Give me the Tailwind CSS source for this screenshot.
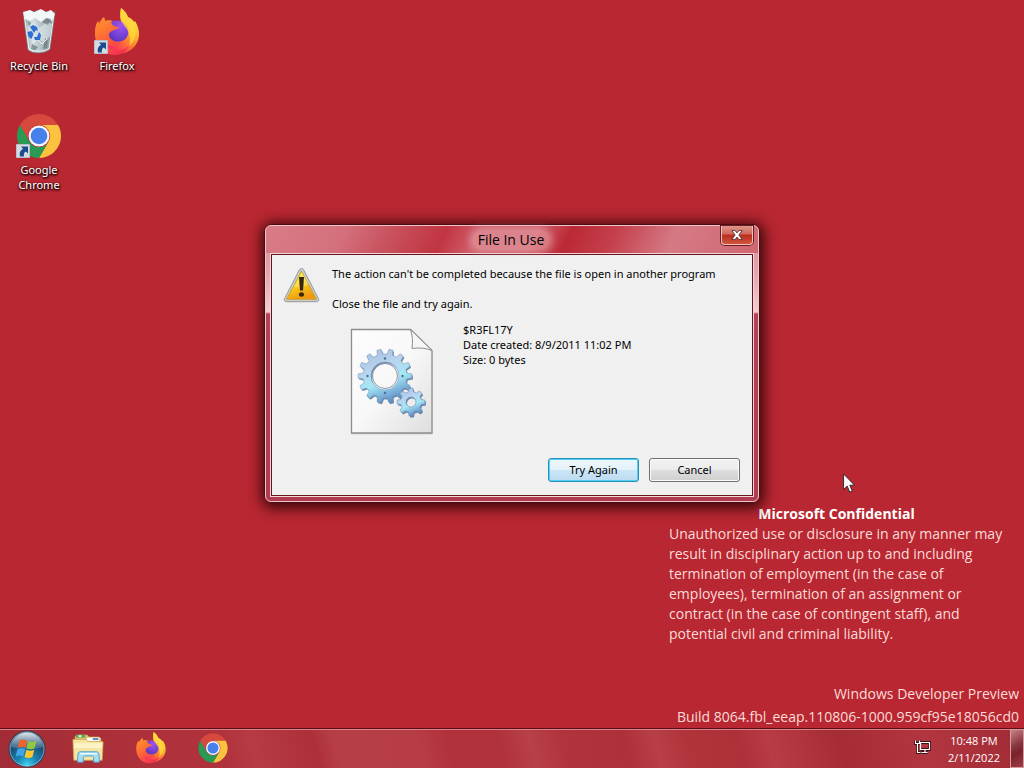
<!DOCTYPE html>
<html lang="en">
<head>
<meta charset="utf-8">
<title>Desktop</title>
<script src="https://cdn.jsdelivr.net/npm/@tailwindcss/browser@4"></script>
</head>
<body class="relative flex h-screen flex-col overflow-hidden bg-[#b92732] font-['Open_Sans','Noto_Sans',sans-serif] text-[11px] leading-[15px] text-black">

<!-- Shared artwork -->
<svg class="absolute size-0" aria-hidden="true">
  <defs>
    <linearGradient id="ffBody" x1="0.85" y1="0.1" x2="0.2" y2="0.95">
      <stop offset="0" stop-color="#fff04a"/><stop offset="0.3" stop-color="#ffbd32"/><stop offset="0.55" stop-color="#ff7a30"/><stop offset="0.8" stop-color="#fb3b56"/><stop offset="1" stop-color="#e8258a"/>
    </linearGradient>
    <linearGradient id="ffHead" x1="0" y1="0" x2="0.6" y2="1">
      <stop offset="0" stop-color="#ff9a2c"/><stop offset="0.5" stop-color="#ff6a35"/><stop offset="1" stop-color="#f4334f"/>
    </linearGradient>
    <radialGradient id="ffGlobe" cx="0.6" cy="0.25" r="0.8">
      <stop offset="0" stop-color="#a552e8"/><stop offset="0.6" stop-color="#7542d8"/><stop offset="1" stop-color="#5a35b8"/>
    </radialGradient>
    <symbol id="firefox" viewBox="0 0 48 48">
      <path fill="url(#ffBody)" d="M28 0c4 3 6 6 7 9 3 1 5 3 6 5l1-1c3 5 4 9 4 13 0 11-9 20-22 20S2 38 2 25c0-5 1-9 3-12l1 3c1-3 3-5 5-7l1 4c3-1 6-1 9 1 3-1 5-1 7 0-1-4-1-9 0-14z"/>
      <path fill="url(#ffHead)" d="M2 25c0-5 1-9 3-12l1 3c1-3 3-5 5-7l1 4c4-1 7 0 9 3l5 3c-1 2-4 3-6 4-2 1-3 3-3 5 1 5 6 8 12 6-4 5-12 5-17 1 4 9 17 10 24 3-3 6-8 9-14 9C10 47 2 37 2 25z"/>
      <path fill="url(#ffGlobe)" d="M18 14c6-3 13-1 16 4 3 6 1 13-5 15-6 2-13-1-13-6 0-3 3-4 5-5 3-1 5-2 5-3-3 0-7-1-8-5z"/>
      <path fill="#ffd83e" d="M28 0c5 4 6 8 7 11 6 4 9 10 7 18-1 4-3 7-6 9 2-7 1-13-3-18-4-5-7-9-5-20z" opacity=".75"/>
    </symbol>
    <symbol id="chrome" viewBox="0 0 48 48">
      <path fill="#d6493c" d="M24 13H43.05A22 22 0 0 0 4.95 13L14.47 29.5A11 11 0 0 1 24 13z"/>
      <path fill="#fac23f" d="M43.05 13H24A11 11 0 0 1 33.53 29.5L24 46A22 22 0 0 0 43.05 13z"/>
      <path fill="#289a54" d="M4.95 13A22 22 0 0 0 24 46L33.53 29.5A11 11 0 0 1 14.47 29.5z"/>
      <circle cx="24" cy="24" r="10.5" fill="#f4f6fb"/>
      <circle cx="24" cy="24" r="8.3" fill="#4680ea"/>
    </symbol>
    <symbol id="shortcut" viewBox="0 0 14 14">
      <path fill="#d5dae3" stroke="#b9bfca" d="M.5.5h13v13H.5z"/>
      <path fill="#1c4a8f" d="M5 2.500h7v7L9.800 7.500C8 8.500 7.500 10 8 12.500H4C3 9 4 6.500 7 4.800z"/>
    </symbol>
  </defs>
</svg>

<main class="relative min-h-0 flex-1">
  <nav aria-label="Desktop icons" class="grid w-[156px] grid-cols-2 auto-rows-[104px] text-center font-['Noto_Sans',sans-serif] text-white [text-shadow:1px_1px_2px_#000,0_1px_3px_#000]">
    <a href="#recycle" class="flex flex-col items-center gap-0.5 pt-2">
      <svg class="size-12" viewBox="0 0 48 48" aria-hidden="true">
        <defs><linearGradient id="bin" x1="0" x2="1"><stop offset="0" stop-color="#8f9fa6"/><stop offset=".3" stop-color="#d3dde1"/><stop offset=".65" stop-color="#a9b8be"/><stop offset="1" stop-color="#7a888e"/></linearGradient></defs>
        <path fill="url(#bin)" stroke="#6f7c82" stroke-width=".8" d="M8 4l5 38c5 4 17 4 22-1l5-37z"/>
        <path fill="#4b585c" d="M9 5c8-3 24-3 30 0-5 5-25 5-30 0z"/>
        <path fill="#f3f7f8" d="M8 4l7-2 4 2 7-3 5 3 5-2 4 4-3 7-6-3-5 4-6-4-5 3-5-2z"/>
        <path fill="#dfe8ec" d="M12 18l7-4 5 6 8-6 5 2-2 12-6 6-6-3-5 4-4-6z" opacity=".65"/>
        <path fill="#64747a" d="M27 14l5-4 4 1-3 6zM13 13l3 2-2 4zM30 30l3 3-1 7-4 1zM17 36l6 3-3 4-4-2z" opacity=".65"/>
        <path fill="none" stroke="#eef3f5" stroke-width="1" d="M9 6l5 35c6 3 14 3 20 0l5-35M18 35l4-4 5 5 5-5"/>
        <g fill="#2f6fd2"><path d="M15 19l3-2 4 2 1 4-2-1-2 3-2-3z"/><path d="M12.500 24l4-1 2 3-2 5-3-2z"/><path d="M24 24l2 3-1 5h-5l-1-3h3z"/></g>
      </svg>
      <span>Recycle Bin</span>
    </a>
    <a href="#firefox" class="flex flex-col items-center gap-0.5 pt-2">
      <svg class="size-12" viewBox="0 0 48 48" aria-hidden="true"><use href="#firefox" width="48" height="48"/><use href="#shortcut" x="1" y="32" width="14" height="14"/></svg>
      <span>Firefox</span>
    </a>
    <a href="#chrome" class="flex flex-col items-center gap-0.5 pt-2">
      <svg class="size-12" viewBox="0 0 48 48" aria-hidden="true"><use href="#chrome" width="48" height="48"/><use href="#shortcut" x="1" y="32" width="14" height="14"/></svg>
      <span>Google<br>Chrome</span>
    </a>
  </nav>

  <section class="absolute right-0 bottom-0 flex w-[355px] flex-col text-[14px] leading-5 text-[#fbdcd8]">
    <h2 class="w-[335px] text-center font-bold text-white">Microsoft Confidential</h2>
    <p class="whitespace-nowrap">Unauthorized use or disclosure in any manner may<br>result in disciplinary action up to and including<br>termination of employment (in the case of<br>employees), termination of an assignment or<br>contract (in the case of contingent staff), and<br>potential civil and criminal liability.</p>
    <p class="mt-[38px] pr-[5px] text-right leading-[23px] whitespace-nowrap">Windows Developer Preview<br>Build 8064.fbl_eeap.110806-1000.959cf95e18056cd0</p>
  </section>

  <div role="dialog" aria-labelledby="dlg-title" class="absolute top-[224px] left-[264px] w-[496px] rounded-[7px] border border-[#4a0b12] shadow-[1px_2px_14px_3px_rgba(30,0,0,0.85)]">
    <div class="rounded-[6px] border border-[#f3c3c8] bg-[linear-gradient(#d98c96_0,#e3a9b0_50px,#f0d0d4_86px,#b24358_88px,#b03c50_100%)] px-1 pb-1">
      <header class="-mx-1 flex h-[27px] items-start rounded-t-[5px] bg-[linear-gradient(115deg,#d87c88_0%,#d4707c_16%,#c95662_24%,#c13541_36%,#cf5f6b_43%,#cf5f6b_54%,#bb2935_61%,#c4404c_70%,#d57a85_82%,#cf6772_100%)] pl-[35px]">
        <h1 id="dlg-title" class="flex h-full flex-1 items-center justify-center text-[14px]"><span class="rounded-full bg-[#e9a9af]/50 px-1.5 leading-5 shadow-[0_0_6px_3px_rgba(233,169,175,0.5)]">File In Use</span></h1>
        <button type="button" aria-label="Close" class="mr-[5px] flex h-[19px] w-8 items-center justify-center rounded-b-[4px] border border-t-0 border-[#f1c1bd] bg-[linear-gradient(#de958b_0%,#d0685a_45%,#b92c1c_50%,#d2553c_100%)] shadow-[0_0_0_1px_#6d1c1f]">
          <svg class="h-3 w-[14px]" viewBox="0 0 12 10" aria-hidden="true"><path d="M1.500 1.200h2.800L6 3.200l1.700-2h2.800L7.600 5l2.900 3.800H7.700L6 6.800l-1.700 2H1.500L4.400 5z" fill="#fff" stroke="#5b3236" stroke-width=".8"/></svg>
        </button>
      </header>
      <div class="border border-[#f6d5d8]">
        <div class="border border-[#651420] bg-[#f0f0f0] pt-[11px] pr-3 pb-[13px] pl-[11px] font-['Noto_Sans',sans-serif]">
          <div class="flex gap-3">
            <svg class="mt-px h-[36px] w-[37px] shrink-0" viewBox="0 0 37 36" aria-hidden="true">
              <defs><linearGradient id="warn" x1="0" y1="0" x2=".4" y2="1"><stop offset="0" stop-color="#e9ee28"/><stop offset=".5" stop-color="#fbd51a"/><stop offset="1" stop-color="#f09a12"/></linearGradient></defs>
              <path d="M18.500 1.500c1 0 1.800.6 2.300 1.600l14.600 28.500c.9 1.800 0 3.100-1.900 3.100h-30c-1.900 0-2.800-1.300-1.900-3.100L16.200 3.100c.5-1 1.300-1.600 2.300-1.600z" fill="#c9ced1" stroke="#92989c"/>
              <path d="M18.500 4L3.500 32.300h30z" fill="url(#warn)" stroke="#c79a1c" stroke-width=".8"/>
              <path d="M18.500 5.500L11 20c6 1 12-1 15-3z" fill="#fff" opacity=".25"/>
              <path d="M16 10h5l-1 13.500h-3z" fill="#33260a"/><ellipse cx="18.500" cy="27.500" rx="2.600" ry="2.200" fill="#33260a"/>
            </svg>
            <div class="flex-1">
              <p>The action can't be completed because the file is open in another program</p>
              <p class="mt-[15px]">Close the file and try again.</p>
              <div class="mt-[11px] ml-[18px] flex gap-[29px]">
                <svg class="mt-1.5 h-[107px] w-[84px] shrink-0" viewBox="0 0 84 107" aria-hidden="true">
                  <defs>
                    <linearGradient id="page" x1="0" y1="0" x2="1" y2="1"><stop offset="0" stop-color="#fdfdfd"/><stop offset=".5" stop-color="#f8f8f8"/><stop offset="1" stop-color="#dedede"/></linearGradient>
                    <linearGradient id="gear" x1=".2" y1="0" x2=".6" y2="1"><stop offset="0" stop-color="#a4bfe2"/><stop offset=".35" stop-color="#b9d4ee"/><stop offset=".62" stop-color="#a5e8f5"/><stop offset="1" stop-color="#5b89c4"/></linearGradient>
                  </defs>
                  <path d="M1.500 2.500h60l21 21v83h-81z" fill="#000" opacity=".12"/>
                  <path d="M1.500 1.500h59l21.500 21V105h-80.500z" fill="url(#page)" stroke="#8d8d8d" stroke-width="1.300"/>
                  <path d="M60.500 1.500c2 6 2.500 12 1.500 19 7-1 14-.5 20 2z" fill="#f6f6f6" stroke="#8d8d8d"/>
                  <g id="gears" stroke="#6f8fb6"></g>
                </svg>
                <p>$R3FL17Y<br>Date created: 8/9/2011 11:02 PM<br>Size: 0 bytes</p>
              </div>
            </div>
          </div>
          <div class="mt-[23px] flex justify-end gap-[10px]">
            <button type="button" class="h-6 w-[91px] rounded-[3px] border border-[#2b8fb5] bg-[linear-gradient(#eff6fb_0%,#e3f1fa_48%,#cbe5f5_52%,#bcdcf0_100%)] pb-0.5 shadow-[inset_0_0_0_1px_#4fd2f2]">Try Again</button>
            <button type="button" class="h-6 w-[91px] rounded-[3px] border border-[#707070] bg-[linear-gradient(#f3f3f3_0%,#ebebeb_48%,#dddddd_52%,#cfcfcf_100%)] pb-0.5 shadow-[inset_0_0_0_1px_#fbfbfb]">Cancel</button>
          </div>
        </div>
      </div>
    </div>
  </div>

  <svg class="absolute top-[473px] left-[843px] h-5 w-3" viewBox="0 0 12 20" aria-hidden="true"><path d="M.6 1v15.500l3.600-3.400 2.500 6 2.600-1.100-2.500-5.800h4.700z" fill="#fff" stroke="#222" stroke-width=".9"/></svg>
</main>

<footer class="flex h-10 shrink-0 items-stretch border-t border-[#5d0d16] bg-[linear-gradient(75deg,#a02c35_0%,#ab2f39_10%,#b0323c_22%,#b63b44_25%,#ad3038_31%,#b63f47_33%,#b73d45_41%,#b1323b_44%,#b1323b_49%,#b84048_52%,#b1343c_55%,#ae3038_61%,#b83f47_64%,#b1343b_67%,#ae3038_72%,#b83c45_75%,#a52b34_82%,#b23640_90%,#a02b34_100%)]">
  <div class="flex min-w-0 flex-1 items-center border-t border-[#db8188] pl-2">
    <button type="button" aria-label="Start" class="mr-[23px]">
      <svg class="size-[38px]" viewBox="0 0 38 38" aria-hidden="true">
        <defs>
          <radialGradient id="orb" cx=".5" cy=".95" r=".95"><stop offset="0" stop-color="#45d3f2"/><stop offset=".3" stop-color="#1984b4"/><stop offset=".65" stop-color="#1b4d74"/><stop offset="1" stop-color="#38556e"/></radialGradient>
          <linearGradient id="gloss" x1="0" y1="0" x2="0" y2="1"><stop offset="0" stop-color="#f2f6fa" stop-opacity=".9"/><stop offset="1" stop-color="#b9cbd8" stop-opacity=".15"/></linearGradient>
        </defs>
        <circle cx="19" cy="19" r="18" fill="url(#orb)" stroke="#2c3b4c" stroke-width="1"/>
        <circle cx="19" cy="19" r="17" fill="none" stroke="#9ec6da" stroke-opacity=".7"/>
        <path d="M3 17C4 8 11 2.500 19 2.500S34 8 35 17c-9 3-23 3-32 0z" fill="url(#gloss)"/>
        <path d="M11.500 10.500c2.500-1.500 5-1.500 7.500 0l-1.600 7.300c-2.500-1.500-5-1.400-7.700 0z" fill="#f0642c"/>
        <path d="M20.300 11c2.700 1.400 5.300 1.300 8.200 0l-1.900 7.300c-2.700 1.400-5.200 1.300-7.900 0z" fill="#92c83e"/>
        <path d="M9.400 19.200c2.600-1.400 5.100-1.400 7.700 0l-1.800 7.300c-2.400-1.400-4.900-1.400-7.700 0z" fill="#3fa7e8"/>
        <path d="M18.400 19.800c2.700 1.400 5.200 1.300 7.900 0l-1.900 7.300c-2.700 1.400-5.200 1.300-7.900 0z" fill="#fcc92c"/>
      </svg>
    </button>
    <div class="flex items-center gap-[30px] pb-0.5">
      <button type="button" aria-label="Windows Explorer" class="w-9">
        <svg class="ml-0.5 h-8 w-[34px]" viewBox="0 0 36 32" aria-hidden="true">
          <path d="M4 4l2-2h11l2 2h11l2 2v20H4z" fill="#d8bf6c"/>
          <path d="M5 2h10v3H5z" fill="#54a84e"/><path d="M17 5h13v4H17z" fill="#fff"/><path d="M23 5.500h6v2h-6z" fill="#5287cc"/><path d="M8 2.500h3v2H8z" fill="#fff"/>
          <path d="M2 7h14l2 2h15c1 0 1 1 1 1l-1 19H3z" fill="#f5e4a2" stroke="#caa956" stroke-width=".8"/>
          <path d="M3 11h30v5H3z" fill="#fff6cf" opacity=".8"/>
          <path d="M7 31c0-8 0-11 3-11h17c3 0 3 3 3 11h-6v-5c0-1-1-1.500-2-1.500h-7c-1 0-2 .5-2 1.500v5z" fill="#a4dcf2" stroke="#4e9dc5"/>
          <path d="M9.500 22h18" stroke="#effaff" stroke-width="1.500"/>
        </svg>
      </button>
      <button type="button" aria-label="Firefox" class="w-8"><svg class="size-8" aria-hidden="true"><use href="#firefox" width="32" height="32"/></svg></button>
      <button type="button" aria-label="Google Chrome" class="w-8"><svg class="size-8" aria-hidden="true"><use href="#chrome" width="32" height="32"/></svg></button>
    </div>
    <button type="button" aria-label="Network" class="mr-[17px] ml-auto pb-1">
      <svg class="h-4 w-[17px]" viewBox="0 0 17 16" aria-hidden="true">
        <path d="M6.500 3.500h9v7h-9M11 10.500v3M7.500 13.500h6M1.500 1.500v3h4v-3M3.500 5v8.500h3" fill="none" stroke="#3d0f13" stroke-width="3"/>
        <path d="M6.500 3.500h9v7h-9zM11 10.500v3M7.500 13.500h6M1.500 1.500v3h4v-3M3.500 5v8.500h3" fill="none" stroke="#fff" stroke-width="1.200"/>
      </svg>
    </button>
    <div class="mr-[10px] text-center leading-[17px] text-white"><time datetime="2022-02-11T22:48">10:48 PM<br>2/11/2022</time></div>
  </div>
  <button type="button" aria-label="Show desktop" class="w-[14px] border border-[#d79aa0] bg-[linear-gradient(150deg,#c98288_0%,#8a3a42_40%,#7a222b_60%,#a03c45_100%)]"></button>
</footer>

<script>
  // Builds a toothed outline with a round hole, used for the file artwork.
  function gearPath(cx, cy, outer, root, hole, teeth) {
    const pt = (r, a) => (cx + r * Math.cos(a)).toFixed(1) + ' ' + (cy + r * Math.sin(a)).toFixed(1);
    const step = 2 * Math.PI / teeth;
    let d = '';
    for (let i = 0; i < teeth; i++) {
      const a = i * step;
      d += (i ? 'L' : 'M') + pt(root, a - step * 0.3) + 'L' + pt(outer, a - step * 0.17) + 'L' + pt(outer, a + step * 0.17) + 'L' + pt(root, a + step * 0.3);
    }
    return d + 'Z M' + (cx + hole) + ' ' + cy + 'a' + hole + ' ' + hole + ' 0 1 0 ' + (-2 * hole) + ' 0a' + hole + ' ' + hole + ' 0 1 0 ' + (2 * hole) + ' 0z';
  }
  document.getElementById('gears').innerHTML =
    '<path transform="translate(1 1.5)" fill="#3c5f8c" stroke="none" opacity=".7" fill-rule="evenodd" d="' + gearPath(35, 48, 27, 22, 14, 14) + '"/>' +
    '<path fill="url(#gear)" stroke-width=".5" fill-rule="evenodd" d="' + gearPath(35, 48, 27, 22, 14, 14) + '"/>' +
    '<circle cx="35" cy="48" r="12.500" fill="none" stroke="#8796a8"/>' +
    '<g fill="#4d6f97" stroke="none"><circle cx="35" cy="30.500" r="1.200"/><circle cx="35" cy="65" r="1.200"/><circle cx="17.500" cy="48" r="1.200"/><circle cx="52.500" cy="48" r="1.200"/></g>' +
    '<path transform="translate(1 1.5)" fill="#32578c" stroke="none" opacity=".7" fill-rule="evenodd" d="' + gearPath(61, 74, 14, 10.5, 5, 8) + '"/>' +
    '<path fill="url(#gear)" stroke-width=".6" fill-rule="evenodd" d="' + gearPath(61, 74, 14, 10.5, 5, 8) + '"/>';
</script>
</body>
</html>
